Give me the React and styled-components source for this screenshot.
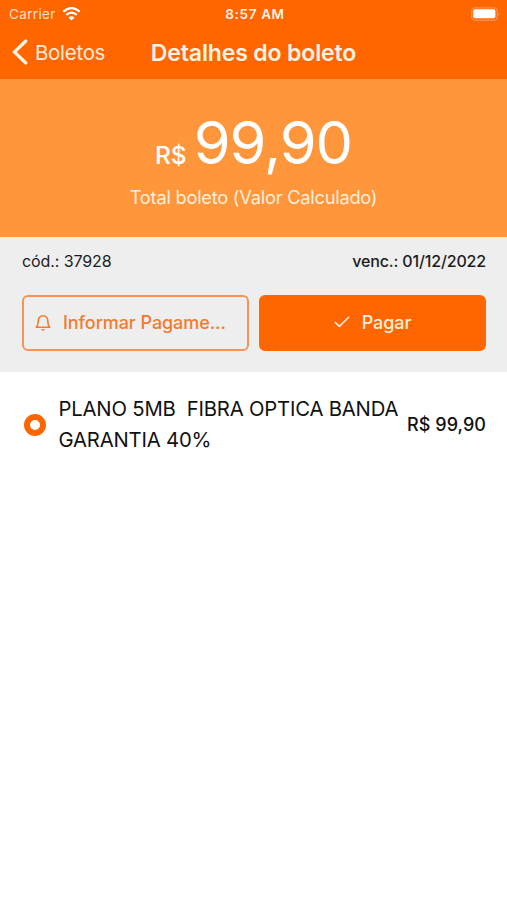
import React from 'react'
import { styled, createGlobalStyle } from 'styled-components'

const GlobalStyle = createGlobalStyle`
    * {
        box-sizing: border-box;
    }

    body {
        margin: 0;
        background-color: #fff;
        font-family: 'Inter', 'Liberation Sans', sans-serif;
        color: #1c1c1c;
    }
`

const Screen = styled.div`
    min-height: 100vh;
    display: flex;
    flex-direction: column;
`

const Header = styled.header`
    height: 79px;
    background-color: #ff6600;
    color: #fff3e6;
`

const StatusBar = styled.div`
    height: 27px;
    padding: 0 6px 0 9px;
    display: grid;
    grid-template-columns: 1fr auto 1fr;
    align-items: center;
`

const Carrier = styled.div`
    display: flex;
    align-items: center;
    gap: 6px;
    font-size: 13.5px;
    letter-spacing: 0.35px;
    color: #ffdcc2;
`

const Clock = styled.div`
    font-size: 13.5px;
    font-weight: 600;
    letter-spacing: 0.65px;
`

const Battery = styled.svg`
    justify-self: end;
`

const NavBar = styled.nav`
    height: 50px;
    padding: 0 12px;
    display: grid;
    grid-template-columns: 1fr auto 1fr;
    align-items: center;
`

const Back = styled.a`
    display: flex;
    align-items: center;
    gap: 7px;
    font-size: 20.5px;
    letter-spacing: -0.3px;
    color: #ffe9d8;
`

const Title = styled.h1`
    margin: 1px 0 0;
    font-size: 23px;
    font-weight: 600;
    letter-spacing: -0.14px;
`

const Total = styled.section`
    height: 158px;
    padding-top: 29px;
    background-color: #ff963c;
    color: #fff;
    text-align: center;
`

const Amount = styled.div`
    height: 68px;
    display: flex;
    justify-content: center;
    align-items: baseline;
    gap: 7px;
    line-height: 68px;
`

const Currency = styled.span`
    font-size: 24.5px;
    font-weight: 500;
`

const Value = styled.span`
    font-size: 59.5px;
    font-weight: 400;
    letter-spacing: -1px;
`

const Caption = styled.div`
    margin-top: 9px;
    font-size: 18.3px;
    line-height: 24px;
    letter-spacing: -0.25px;
    color: #ffeedb;
`

const Info = styled.section`
    height: 135px;
    padding: 14px 21px 0 22px;
    background-color: #eee;
`

const InfoRow = styled.div`
    display: flex;
    justify-content: space-between;
    font-size: 16px;
    line-height: 20px;
    letter-spacing: -0.1px;
`

const DueDate = styled.span`
    font-weight: 550;
    letter-spacing: -0.15px;
`

const Actions = styled.div`
    margin-top: 24px;
    display: grid;
    grid-template-columns: 1fr 1fr;
    gap: 10px;
`

const Button = styled.button`
    height: 56px;
    min-width: 0;
    padding: 0 11px;
    display: flex;
    align-items: center;
    justify-content: ${({ $primary }) => ($primary ? 'center' : 'flex-start')};
    gap: 12px;
    border: 2px solid ${({ $primary }) => ($primary ? '#ff6600' : '#f99254')};
    border-radius: 6px;
    background-color: ${({ $primary }) => ($primary ? '#ff6600' : 'transparent')};
    color: ${({ $primary }) => ($primary ? '#ffeedd' : '#f47a2c')};
    font-family: inherit;
    font-size: 18px;
    font-weight: 550;
    letter-spacing: -0.07px;

    svg {
        flex: none;
    }
`

const ButtonText = styled.span`
    margin-top: -1px;
    white-space: nowrap;
`

const Item = styled.div`
    padding: 21px 21px 0 24px;
    display: flex;
    align-items: center;
    color: #111;
`

const Bullet = styled.span`
    flex: none;
    width: 22px;
    height: 22px;
    margin-top: 2px;
    border: 6px solid #ff6600;
    border-radius: 50%;
`

const Description = styled.div`
    flex: 1;
    margin-left: 12.5px;
    font-size: 20.3px;
    line-height: 31px;
    letter-spacing: -0.19px;
    white-space: pre;
`

const Price = styled.div`
    margin-top: 1px;
    font-size: 18px;
    font-weight: 550;
    letter-spacing: 0.05px;
`

const App = () => {
    return (
        <Screen>
            <GlobalStyle />
            <Header>
                <StatusBar>
                    <Carrier>
                        <span>Carrier</span>
                        <svg width="19" height="14" viewBox="0 0 18 14">
                            <path d="M0.9 4.7 Q9 -2.5 17.1 4.7" fill="none" stroke="#fff" strokeWidth="2.3" />
                            <path d="M3.8 7.9 Q9 3.4 14.2 7.9" fill="none" stroke="#fff" strokeWidth="2.2" />
                            <path d="M6 10.4 Q9 8 12 10.4 L9 13.6 Z" fill="#fff" />
                        </svg>
                    </Carrier>
                    <Clock>8:57 AM</Clock>
                    <Battery width="30" height="14" viewBox="0 0 30 14">
                        <rect x="0.7" y="0.8" width="25.6" height="12.4" rx="3.6" fill="none" stroke="#ff9150" strokeWidth="1.3" />
                        <rect x="2.2" y="2.3" width="22.2" height="9" rx="2" fill="#fff" />
                        <path d="M27.6 5 Q29.6 7 27.6 9 Z" fill="#ff9150" />
                    </Battery>
                </StatusBar>
                <NavBar>
                    <Back>
                        <svg width="16" height="26" viewBox="0 0 16 26">
                            <path d="M13.8 2 L2.4 13 L13.8 24" fill="none" stroke="#fff3e6" strokeWidth="3.2" strokeLinecap="round" />
                        </svg>
                        <span>Boletos</span>
                    </Back>
                    <Title>Detalhes do boleto</Title>
                </NavBar>
            </Header>

            <Total>
                <Amount>
                    <Currency>R$</Currency>
                    <Value>99,90</Value>
                </Amount>
                <Caption>Total boleto (Valor Calculado)</Caption>
            </Total>

            <Info>
                <InfoRow>
                    <span>cód.: 37928</span>
                    <DueDate>venc.: 01/12/2022</DueDate>
                </InfoRow>
                <Actions>
                    <Button>
                        <svg width="16" height="19" viewBox="0 0 17 19" fill="none" stroke="currentColor" strokeWidth="1.7" strokeLinejoin="round">
                            <path d="M1.3 13.5 C2.8 12 3.4 10.8 3.4 7.4 C3.4 3.8 5.4 1.2 8.5 1.2 C11.6 1.2 13.6 3.8 13.6 7.4 C13.6 10.8 14.2 12 15.7 13.5 Z" />
                            <path d="M6.2 15.6 Q8.5 18.8 10.8 15.6 Z" fill="currentColor" stroke="none" />
                        </svg>
                        <ButtonText>Informar Pagame...</ButtonText>
                    </Button>
                    <Button $primary>
                        <svg width="16" height="14" viewBox="0 0 16 14" fill="none" stroke="currentColor" strokeWidth="1.6" strokeLinecap="round" strokeLinejoin="round">
                            <path d="M1.2 6.4 L5.4 10.4 L14.6 1.3" />
                        </svg>
                        <ButtonText>Pagar</ButtonText>
                    </Button>
                </Actions>
            </Info>

            <Item>
                <Bullet />
                <Description>{'PLANO 5MB  FIBRA OPTICA BANDA\nGARANTIA 40%'}</Description>
                <Price>R$ 99,90</Price>
            </Item>
        </Screen>
    )
}

export default App
